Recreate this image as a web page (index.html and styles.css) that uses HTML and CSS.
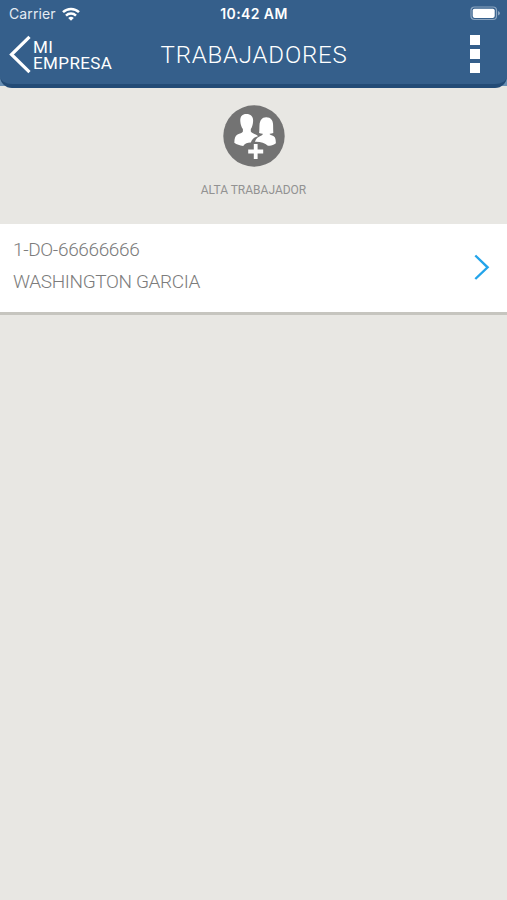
FILE: index.html
```
<!DOCTYPE html>
<html lang="es">
<head>
  <meta charset="UTF-8">
  <meta name="viewport" content="width=device-width, initial-scale=1.0">
  <title>Trabajadores</title>
  <link rel="stylesheet" href="styles.css">
</head>
<body>

  <div class="header-bg">
    <header>
      <div class="status-bar">
        <div class="carrier">
          <span>Carrier</span>
          <svg class="wifi" width="18" height="14" viewBox="0 0 18 14" fill="none" stroke="#fff" stroke-width="2.5">
            <path d="M1 5.2a11.5 11.5 0 0 1 16 0"/>
            <path d="M4 8.6a7.2 7.2 0 0 1 10 0"/>
            <path d="M6.2 11a4 4 0 0 1 5.6 0L9 13.8z" fill="#fff" stroke="none"/>
          </svg>
        </div>
        <span class="time">10:42 AM</span>
        <svg class="battery" width="31" height="15" viewBox="0 0 31 15">
          <rect x="1" y="1" width="25.5" height="12.5" rx="3.5" fill="none" stroke="#8ba5c0" stroke-width="1.2"/>
          <rect x="2.7" y="2.7" width="22" height="9.2" rx="1.8" fill="#fff"/>
          <path d="M28 5v4.6q2-.8 2-2.3T28 5z" fill="#8ba5c0"/>
        </svg>
      </div>
      <div class="nav-bar">
        <a class="back">
          <svg width="22" height="40" viewBox="0 0 22 40" fill="none" stroke="#fff" stroke-width="3.2">
            <path d="M20.5 1.8L2.5 19.5l18 17.7"/>
          </svg>
          <div class="back-text">
            <div>MI</div>
            <div>EMPRESA</div>
          </div>
        </a>
        <h1>TRABAJADORES</h1>
        <div class="menu"><i></i><i></i><i></i></div>
      </div>
    </header>
  </div>

  <div class="alta">
    <svg width="62" height="62" viewBox="0 0 62 62">
      <circle cx="31" cy="31" r="30.7" fill="#737373"/>
      <g fill="#fff">
        <path d="M23.4 9c4.6 0 7 2.8 6.7 7.2-.2 3.4-1.1 6.2-2.3 7.8v2.6c1.2 2.2 5 2.2 7.2 4.6-3.8.8-5.8 2.9-7.2 6.3-3-.1-5.6.8-7.6 3.4-3.4-.4-6.6-1.3-8.9-3.1.2-4.3.8-7 3.2-8.3 2.2-1.1 4.8-1.3 5.4-2.9V24c-1.3-1.6-2.4-4.4-2.6-7.8-.3-4.4 1.6-7.2 6.1-7.2z"/>
        <path d="M43.2 12.3c4.8 0 6.8 3.3 6.9 7.5.1 2.8 0 5.7.2 8.2-1.2.5-2.4.7-3.6.7v.6c1 1.1 4.1 1.4 5.1 3 .8 1.4 1 3.5 1.1 5.9-2.5 1.8-5.1 2.6-8 2.6-3.2-3-7.5-4.2-13-4 1.2-3.6 3.4-4.8 6-6 .9-.4 1.7-.8 1.8-1.5v-.6c-1.2 0-2.4-.2-3.6-.7.4-2.5.2-5.2.4-8 .3-4.4 2.4-7.7 6.7-7.7z"/>
      </g>
      <path d="M32.7 39v15M25.2 46.5h15" stroke="#fff" stroke-width="3.8"/>
    </svg>
    <span>ALTA TRABAJADOR</span>
  </div>

  <div class="trabajador">
    <div class="datos">
      <div class="codigo">1-DO-66666666</div>
      <div class="nombre">WASHINGTON GARCIA</div>
    </div>
    <svg width="16" height="26" viewBox="0 0 16 26" fill="none" stroke="#23a4ea" stroke-width="2.4">
      <path d="M1.3 1.5L13.6 13.3 1.3 25"/>
    </svg>
  </div>

</body>
</html>
```
FILE: styles.css
```
* {
  box-sizing: border-box;
}

body {
  margin: 0;
  min-height: 100vh;
  background-color: #e8e7e3;
  color: #929292;
  font-family: Roboto, 'Liberation Sans', sans-serif;
}

svg {
  display: block;
  flex: none;
}

/* Cabecera */
.header-bg {
  background: linear-gradient(#6a90b4, #6a90b4) top / 100% 86px no-repeat;
}

header {
  height: 88px;
  background-color: #355f8b;
  border-bottom: 4px solid #234b76;
  border-radius: 0 0 12px 12px;
  color: #fff;
}

.status-bar {
  display: grid;
  grid-template-columns: 1fr auto 1fr;
  align-items: center;
  height: 27px;
  padding: 0 8px 0 9px;
  font-family: Inter, sans-serif;
  font-size: 14px;
}

.carrier {
  display: flex;
  align-items: center;
  gap: 6px;
  color: #e4ebf3;
  letter-spacing: 0.1px;
}

.time {
  font-weight: 600;
  font-size: 14px;
  letter-spacing: 0.4px;
}

.battery {
  justify-self: end;
  margin-right: -2px;
}

.nav-bar {
  display: grid;
  grid-template-columns: 1fr auto 1fr;
  align-items: center;
  height: 56px;
  padding: 0 27px 0 9px;
}

.back {
  display: flex;
  align-items: center;
  gap: 2px;
  font-size: 17px;
  letter-spacing: 0.4px;
}

.back-text div {
  height: 16px;
  line-height: 16px;
}

h1 {
  margin: 0 0 0 19px;
  font-size: 24px;
  font-weight: 300;
  letter-spacing: 0.8px;
}

.menu {
  justify-self: end;
  display: flex;
  flex-direction: column;
  gap: 4px;
  margin-top: -2px;
}

.menu i {
  width: 10px;
  height: 10px;
  background-color: #fff;
}

/* Boton de alta */
.alta {
  display: flex;
  flex-direction: column;
  align-items: center;
  height: 137px;
  margin-bottom: -1px;
  padding-top: 17px;
  font-size: 12px;
}

.alta span {
  margin-top: 16px;
}

/* Lista */
.trabajador {
  display: flex;
  align-items: center;
  justify-content: space-between;
  height: 91px;
  padding: 0 17px 2px 13px;
  background-color: #fff;
  border-bottom: 3px solid #c6c5bf;
}

.datos {
  margin-top: -2px;
  color: #7c7c7c;
  font-size: 19px;
  font-weight: 300;
  line-height: 32px;
  letter-spacing: -0.36px;
}
```
